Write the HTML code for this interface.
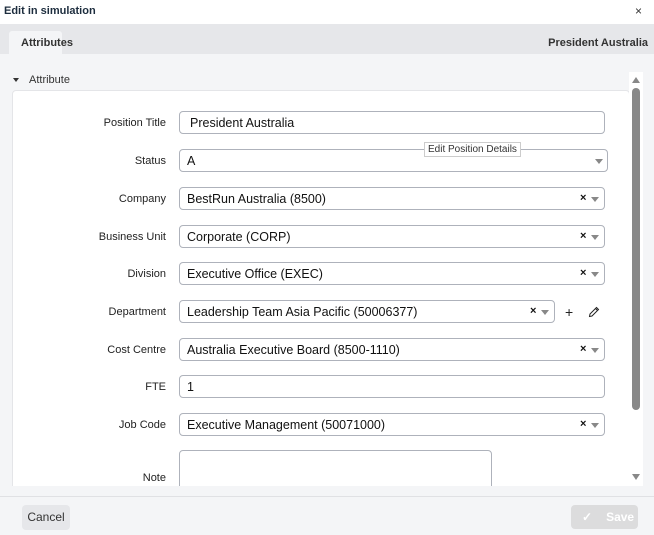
<!DOCTYPE html><html><head><style>
html,body{margin:0;width:654px;height:535px;overflow:hidden}
body{font-family:"Liberation Sans",sans-serif;background:#f4f5f7;position:relative;font-size:12px;color:#222}
.a{position:absolute}
.lbl{position:absolute;right:488px;font-size:11px;color:#222;text-align:right}
.in{position:absolute;left:179px;height:23px;border:1px solid #aeb2bb;border-radius:4px;background:#fff;box-sizing:border-box;font-size:12.5px;line-height:23px;padding-left:7px;color:#111}
.x{position:absolute;font-size:11px;font-weight:bold;top:0;line-height:21px}
.dd{position:absolute;top:9px;width:0;height:0;border-left:4px solid transparent;border-right:4px solid transparent;border-top:5px solid #888}
</style></head><body>
<div class="a" style="left:0;top:0;width:654px;height:24px;background:#fff"></div>
<div class="a" style="left:4px;top:5px;font-size:11px;color:#1d2d3e;font-weight:bold">Edit in simulation</div>
<div class="a" style="left:635px;top:4px;font-size:12px;color:#333">×</div>
<div class="a" style="left:0;top:24px;width:654px;height:30px;background:#e6e7ea"></div>
<div class="a" style="left:9px;top:31px;width:53px;height:23px;background:#f4f5f7;border-radius:3px 3px 0 0"></div>
<div class="a" style="left:21px;top:37px;font-size:11px;color:#333;font-weight:bold">Attributes</div>
<div class="a" style="right:6px;top:37px;font-size:11px;color:#333;font-weight:bold">President Australia</div>
<div class="a" style="left:13px;top:78px;width:0;height:0;border-left:3px solid transparent;border-right:3px solid transparent;border-top:4px solid #333"></div>
<div class="a" style="left:29px;top:74px;font-size:11px;color:#333">Attribute</div>
<div class="a" style="left:0;top:90px;width:654px;height:396px;overflow:hidden">
<div class="a" style="left:12px;top:0;width:616px;height:410px;background:#fff;border:1px solid #e4e5e8;border-radius:4px"></div>
<div class="in" style="top:360px;width:313px;height:50px"></div>
</div>
<div class="a" style="left:629px;top:72px;width:14px;height:414px;background:#fff"></div>
<div class="a" style="left:632px;top:77px;width:0;height:0;border-left:4px solid transparent;border-right:4px solid transparent;border-bottom:6px solid #888"></div>
<div class="a" style="left:632px;top:88px;width:8px;height:322px;background:#888;border-radius:4px"></div>
<div class="a" style="left:632px;top:474px;width:0;height:0;border-left:4px solid transparent;border-right:4px solid transparent;border-top:6px solid #888"></div>

<div class="lbl" style="top:117px">Position Title</div><div class="in" style="top:111px;width:426px;padding-left:10px">President Australia</div>
<div class="lbl" style="top:155px">Status</div><div class="in" style="top:149px;width:429px">A<span class="dd" style="left:415px"></span></div>
<div class="a" style="left:424px;top:142px;font-size:10px;background:#fff;border:1px solid #ccc;padding:1px 3px;color:#333">Edit Position Details</div>
<div class="lbl" style="top:193px">Company</div><div class="in" style="top:187px;width:426px">BestRun Australia (8500)<span class="x" style="left:400px">×</span><span class="dd" style="left:411px"></span></div>
<div class="lbl" style="top:231px">Business Unit</div><div class="in" style="top:225px;width:426px">Corporate (CORP)<span class="x" style="left:400px">×</span><span class="dd" style="left:411px"></span></div>
<div class="lbl" style="top:268px">Division</div><div class="in" style="top:262px;width:426px">Executive Office (EXEC)<span class="x" style="left:400px">×</span><span class="dd" style="left:411px"></span></div>
<div class="lbl" style="top:306px">Department</div><div class="in" style="top:300px;width:376px">Leadership Team Asia Pacific (50006377)<span class="x" style="left:350px">×</span><span class="dd" style="left:361px"></span></div>
<div class="a" style="left:565px;top:304px;font-size:14px">+</div>
<svg class="a" style="left:588px;top:306px" width="12" height="12" viewBox="0 0 12 12"><path d="M1.5 10.5 L2 8 L8.5 1.5 L10.5 3.5 L4 10 Z M7.5 2.5 L9.5 4.5" fill="none" stroke="#222" stroke-width="1"/></svg>
<div class="lbl" style="top:344px">Cost Centre</div><div class="in" style="top:338px;width:426px">Australia Executive Board (8500-1110)<span class="x" style="left:400px">×</span><span class="dd" style="left:411px"></span></div>
<div class="lbl" style="top:381px">FTE</div><div class="in" style="top:375px;width:426px">1</div>
<div class="lbl" style="top:419px">Job Code</div><div class="in" style="top:413px;width:426px">Executive Management (50071000)<span class="x" style="left:400px">×</span><span class="dd" style="left:411px"></span></div>
<div class="lbl" style="top:472px">Note</div>

<div class="a" style="left:0;top:496px;width:654px;height:39px;background:#f4f5f7;border-top:1px solid #e0e1e4"></div>
<div class="a" style="left:22px;top:505px;width:48px;height:25px;background:#e6e7ea;border-radius:4px;text-align:center;line-height:25px;font-size:12px;color:#333">Cancel</div>
<div class="a" style="left:571px;top:505px;width:67px;height:24px;background:#dcdcdd;border-radius:4px;color:#fff;font-size:12px;line-height:24px;font-weight:bold"><span style="margin-left:11px">✓</span><span style="margin-left:14px">Save</span></div>
</body></html>
